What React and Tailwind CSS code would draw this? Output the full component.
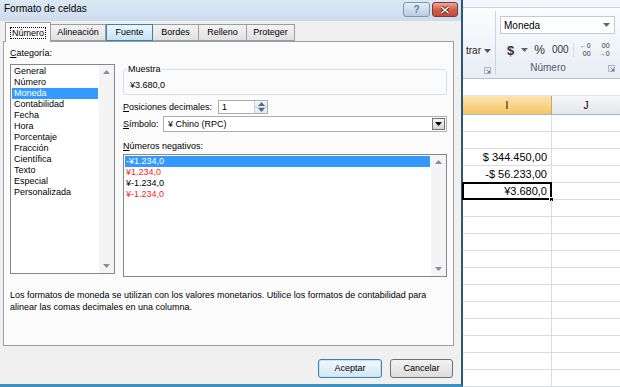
import React from 'react';

const categories = ['General', 'Número', 'Moneda', 'Contabilidad', 'Fecha', 'Hora', 'Porcentaje', 'Fracción', 'Científica', 'Texto', 'Especial', 'Personalizada'];

const negatives = [
  { text: '-¥1.234,0', red: false },
  { text: '¥1.234,0', red: true },
  { text: '¥-1.234,0', red: false },
  { text: '¥-1.234,0', red: true },
];

const cells = { 2: '$ 344.450,00', 3: '-$ 56.233,00', 4: '¥3.680,0' };

function Tri({ down, className }) {
  return (
    <svg width="7" height="4" viewBox="0 0 7 4" className={className}>
      <path d={down ? 'M0 0h7L3.5 4z' : 'M0 4h7L3.5 0z'} fill="currentColor" />
    </svg>
  );
}

function Scrollbar() {
  return (
    <div className="w-[15px] flex flex-col justify-between items-center bg-[#f4f4f4] py-[5px] text-[#8a8f96]">
      <Tri />
      <Tri down />
    </div>
  );
}

function TitleBar() {
  return (
    <div className="h-[21px] flex items-start justify-between pl-[4px] pr-[3px] bg-gradient-to-b from-[#dde8f4] to-[#ccdcee]">
      <span className="text-[10px] leading-[18px] text-black">Formato de celdas</span>
      <div className="flex gap-[2px] mt-[2px]">
        <div className="w-[27px] h-[15px] rounded-[3px] border border-[#7f95b1] bg-gradient-to-b from-[#e6eef8] to-[#b8cce3] flex items-center justify-center">
          <span className="text-[10px] leading-none font-bold text-[#6a7d96]">?</span>
        </div>
        <div className="w-[26px] h-[15px] rounded-[3px] border border-[#7e3a32] bg-gradient-to-b from-[#e9a99c] via-[#d0614f] to-[#c4493a] flex items-center justify-center">
          <svg width="10" height="8" viewBox="0 0 10 8">
            <path d="M1.5 1l7 6M8.5 1l-7 6" stroke="#5a1f18" strokeWidth="3" />
            <path d="M1.5 1l7 6M8.5 1l-7 6" stroke="#fff" strokeWidth="1.6" />
          </svg>
        </div>
      </div>
    </div>
  );
}

function Tabs() {
  return (
    <div className="flex items-end h-[20px] pl-[5px] text-[9px]">
      <div className="w-[46px] h-[20px] bg-[#fbfbfb] border border-b-0 border-[#9a9da2] flex items-center justify-center relative z-10 -mb-px">
        <span className="border border-dotted border-black px-[1px] leading-[10px]">Número</span>
      </div>
      <div className="w-[55px] h-[17px] border border-[#9a9da2] border-l-0 bg-gradient-to-b from-[#f3f3f3] to-[#e1e1e1] flex items-center justify-center">Alineación</div>
      <div className="w-[47px] h-[17px] border border-[#3c7fb1] bg-gradient-to-b from-[#eaf6fd] to-[#c3e3f5] flex items-center justify-center">Fuente</div>
      <div className="w-[46px] h-[17px] border border-[#9a9da2] border-l-0 bg-gradient-to-b from-[#f3f3f3] to-[#e1e1e1] flex items-center justify-center">Bordes</div>
      <div className="w-[48px] h-[17px] border border-[#9a9da2] border-l-0 bg-gradient-to-b from-[#f3f3f3] to-[#e1e1e1] flex items-center justify-center">Relleno</div>
      <div className="w-[48px] h-[17px] border border-[#9a9da2] border-l-0 bg-gradient-to-b from-[#f3f3f3] to-[#e1e1e1] flex items-center justify-center">Proteger</div>
    </div>
  );
}

function Panel() {
  return (
    <div className="ml-[3px] w-[451px] h-[305px] border border-[#9a9da2] bg-[#fbfbfb] px-[6px] pt-[6px] text-[9px] leading-[11px]">
      <div className="flex gap-[8px]">
        {/* Categoría */}
        <div className="w-[105px]">
          <div className="h-[11px]"><u>C</u>ategoría:</div>
          <div className="mt-[5px] h-[210px] border border-[#828790] bg-white flex">
            <div className="flex-1 p-[1px]">
              {categories.map((c) => (
                <div key={c} className={c === 'Moneda' ? 'h-[11px] pl-[2px] bg-[#3399ff] text-white' : 'h-[11px] pl-[2px]'}>{c}</div>
              ))}
            </div>
            <Scrollbar />
          </div>
        </div>

        {/* Opciones */}
        <div className="w-[324px] pt-[16px]">
          <fieldset className="border border-[#d5dfe5] rounded-[3px] px-[6px] pb-[3px]">
            <legend className="-ml-[3px] px-[1px] leading-[11px]">Muestra</legend>
            <div className="pt-[5px] h-[16px]">¥3.680,0</div>
          </fieldset>

          <div className="mt-[5px] flex items-center h-[14px]">
            <span className="w-[95px]"><u>P</u>osiciones decimales:</span>
            <div className="w-[50px] h-[14px] border border-[#abadb3] bg-white flex">
              <span className="flex-1 pl-[3px] leading-[12px]">1</span>
              <div className="w-[13px] flex flex-col border-l border-[#c5d0dc]">
                <div className="flex-1 flex items-center justify-center bg-gradient-to-b from-[#f4f7fb] to-[#dfe7f1] border-b border-[#c5d0dc] text-[#4d6b8f]"><Tri /></div>
                <div className="flex-1 flex items-center justify-center bg-gradient-to-b from-[#f4f7fb] to-[#dfe7f1] text-[#4d6b8f]"><Tri down /></div>
              </div>
            </div>
          </div>

          <div className="mt-[2px] flex items-center h-[16px]">
            <span className="w-[40px]"><u>S</u>ímbolo:</span>
            <div className="flex-1 h-[16px] border border-[#abadb3] bg-white flex items-center">
              <span className="flex-1 pl-[4px]">¥ Chino (RPC)</span>
              <div className="w-[13px] h-[12px] mr-px border border-[#707070] bg-gradient-to-b from-[#f6f6f6] to-[#d4d4d4] flex items-center justify-center text-black"><Tri down /></div>
            </div>
          </div>

          <div className="mt-[9px] h-[11px]"><u>N</u>úmeros negativos:</div>
          <div className="mt-[2px] h-[123px] border border-[#828790] bg-white flex">
            <div className="flex-1 p-[1px]">
              {negatives.map((n, i) => (
                <div key={i} className={i === 0 ? 'h-[11px] pl-px bg-[#3399ff] text-white' : n.red ? 'h-[11px] pl-px text-[#ff1a1a]' : 'h-[11px] pl-px'}>{n.text}</div>
              ))}
            </div>
            <Scrollbar />
          </div>
        </div>
      </div>

      <p className="mt-[12px] leading-[12px]">
        Los formatos de moneda se utilizan con los valores monetarios. Utilice los formatos de contabilidad para alinear las comas decimales en una columna.
      </p>
    </div>
  );
}

function Dialog() {
  return (
    <div className="flex flex-col w-[463px] h-full shrink-0 bg-[#f0f0f0] border-r-2 border-r-[#2c5877] border-b-[3px] border-b-[#3d8fbc]">
      <TitleBar />
      <Tabs />
      <Panel />
      <div className="flex justify-end gap-[8px] mt-[13px] pr-[8px] text-[9px]">
        <button className="w-[64px] h-[19px] rounded-[3px] border border-[#3c7fb1] bg-gradient-to-b from-[#f2f8fc] to-[#d3e7f4] shadow-[inset_0_0_0_1px_#c2e6f8]">Aceptar</button>
        <button className="w-[63px] h-[19px] rounded-[3px] border border-[#707070] bg-gradient-to-b from-[#f2f2f2] to-[#dcdcdc]">Cancelar</button>
      </div>
    </div>
  );
}

function Launcher() {
  return (
    <svg width="7" height="7" viewBox="0 0 7 7">
      <path d="M0.5 0.5h6v6h-6z" fill="none" stroke="#a5b3c4" />
      <path d="M2.5 2.5l3 3M3.5 5.5h2v-2" stroke="#6f7f93" fill="none" />
    </svg>
  );
}

function ExcelPane() {
  const rows = Array.from({ length: 16 }, (_, i) => i);
  return (
    <div className="flex-1 flex flex-col bg-white text-black">
      <div className="h-[9px] bg-[#f3f6fa] border-b border-[#c9d5e3]" />
      <div className="h-[76px] flex bg-gradient-to-b from-[#fbfcfe] to-[#e8edf4] border-b border-[#b6c3d3] text-[10px]">
        <div className="w-[32px] flex flex-col items-end pr-[4px] pt-[37px] pb-[4px]">
          <div className="flex items-center gap-[3px] leading-[12px] text-[#222]">
            <span>trar</span>
            <Tri down className="text-[#555]" />
          </div>
          <div className="mt-auto"><Launcher /></div>
        </div>
        <div className="w-px my-[3px] bg-[#c9d5e2]" />
        <div className="flex-1 flex flex-col pl-[4px] pt-[8px] pb-[4px]">
          <div className="w-[115px] h-[18px] border border-[#c0cbd9] bg-white flex items-center justify-between pl-[3px] pr-[4px]">
            <span>Moneda</span>
            <Tri down className="text-[#666]" />
          </div>
          <div className="mt-[8px] h-[16px] flex items-center text-[#333]">
            <span className="ml-[7px] text-[13px] font-bold leading-none">$</span>
            <Tri down className="ml-[7px] text-[#666]" />
            <span className="ml-[6px] text-[12px] leading-none">%</span>
            <span className="ml-[7px] text-[10px] leading-none">000</span>
            <div className="ml-[4px] w-px h-[14px] bg-[#d3dbe5]" />
            <div className="ml-[2px] w-[15px] flex flex-col items-end text-[7px] leading-[8px]">
              <div className="flex items-center"><span className="text-[#2a6fc9]">←</span>0</div>
              <div>00</div>
            </div>
            <div className="ml-[4px] w-[15px] flex flex-col items-end text-[7px] leading-[8px]">
              <div>00</div>
              <div className="flex items-center"><span className="text-[#2a6fc9]">→</span>0</div>
            </div>
          </div>
          <div className="mt-auto flex items-center">
            <span className="w-[96px] text-center leading-[12px] text-[#4d5c6e]">Número</span>
            <div className="ml-auto mr-[5px]"><Launcher /></div>
          </div>
        </div>
      </div>
      <div className="h-[18px] bg-white border-b border-[#dde3ea]" />
      <div className="h-[20px] flex border-b border-[#9eb6ce] text-[10px]">
        <div className="w-[89px] flex items-center justify-center bg-gradient-to-b from-[#fbe4b0] to-[#f4c563] border-r border-[#c9a85c]">I</div>
        <div className="flex-1 flex items-center justify-center bg-gradient-to-b from-[#f6f7f9] to-[#e2e6eb]">J</div>
      </div>
      {rows.map((r) => (
        <div key={r} className="h-[17px] shrink-0 flex border-b border-[#dadcdd] text-[11px] leading-[16px]">
          <div className="w-[89px] relative border-r border-[#dadcdd] text-right pr-[4px]">
            {cells[r]}
            {r === 4 && (
              <>
                <div className="absolute -left-px -top-px -right-px -bottom-px border-2 border-black" />
                <div className="absolute -right-[3px] -bottom-[3px] w-[5px] h-[5px] bg-black border border-white" />
              </>
            )}
          </div>
          <div className="flex-1" />
        </div>
      ))}
    </div>
  );
}

export default function App() {
  return (
    <div className="flex w-[620px] h-[387px] overflow-hidden bg-white text-black font-['Liberation_Sans',Arial,sans-serif]">
      <Dialog />
      <ExcelPane />
    </div>
  );
}
